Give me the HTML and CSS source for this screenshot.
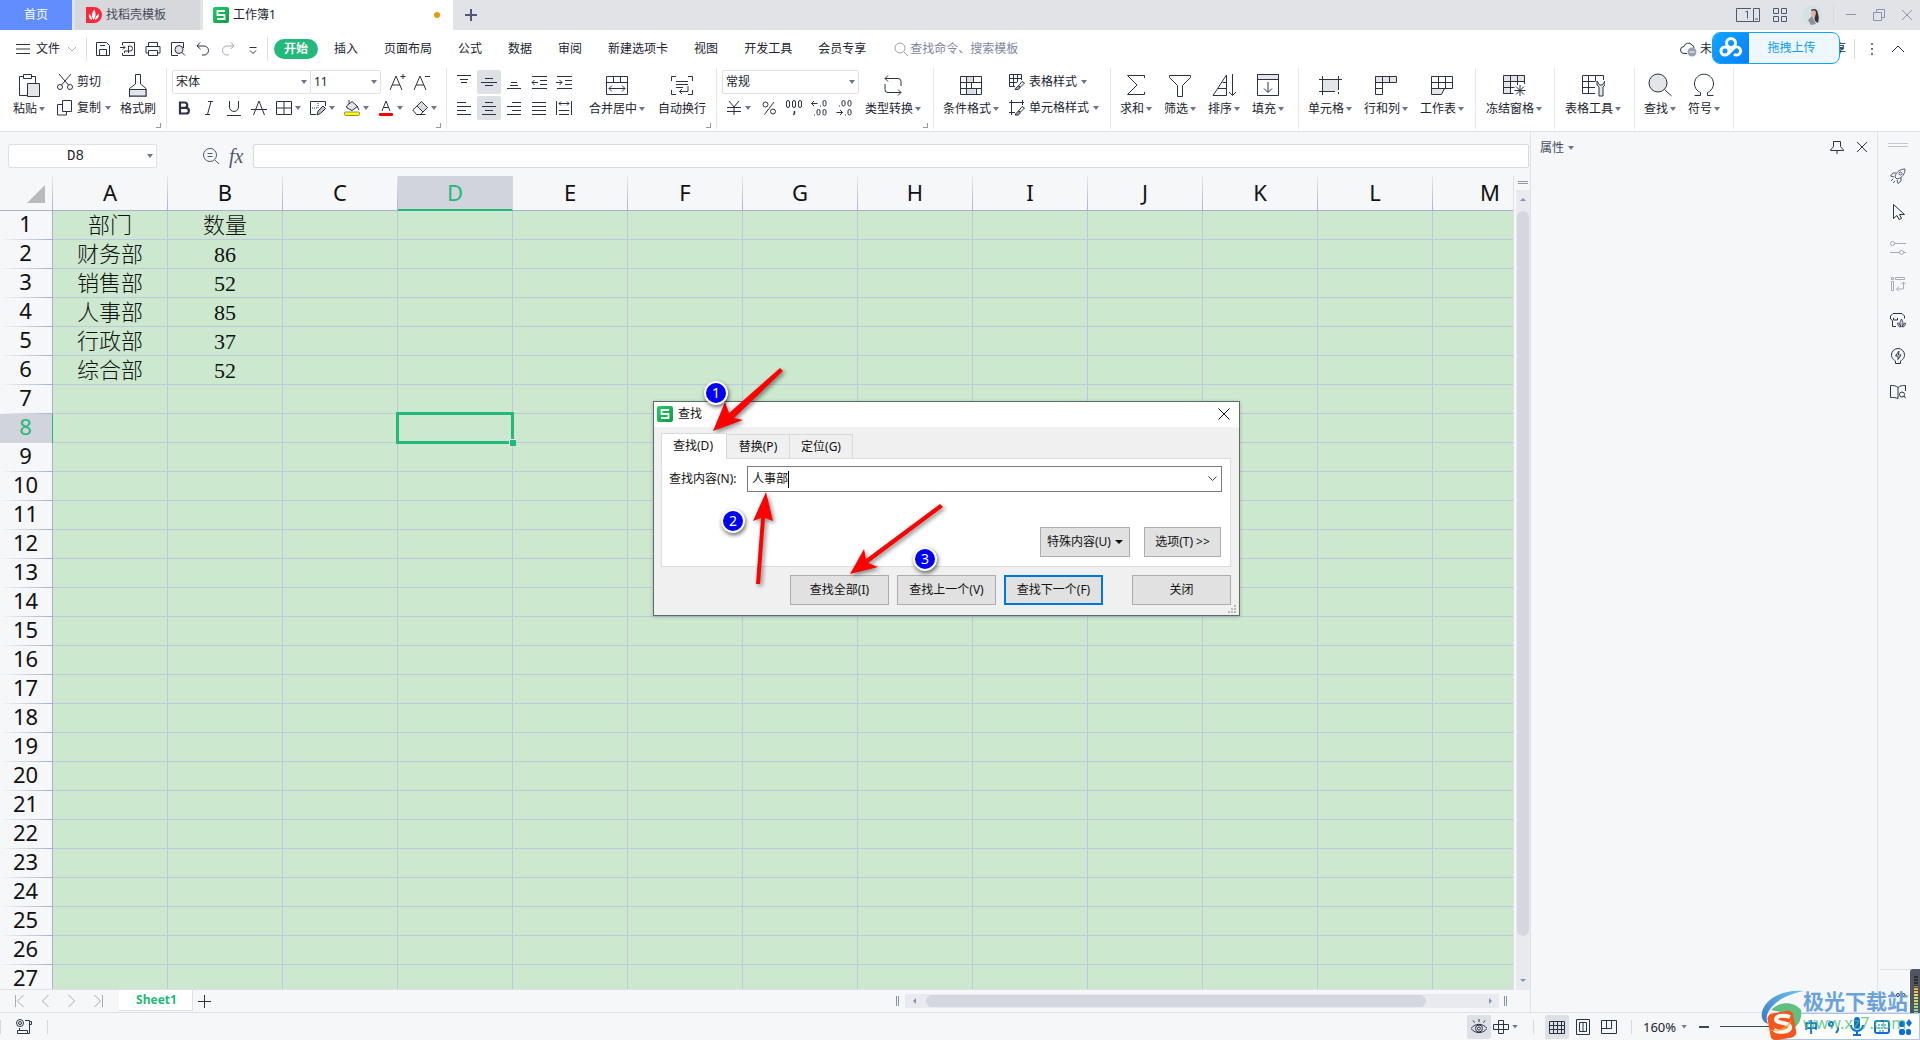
FILE: index.html
```html
<!DOCTYPE html>
<html lang="zh-CN">
<head>
<meta charset="utf-8">
<title>工作簿1</title>
<link rel="stylesheet" href="styles.css">
</head>
<body>
<svg class="sprite" aria-hidden="true">
  <linearGradient id="leaf" x1="0" y1="0" x2="1" y2="1"><stop offset="0" stop-color="#1fce63"/><stop offset="1" stop-color="#119a48"/></linearGradient>
  <linearGradient id="sky" x1="0" y1="1" x2="1" y2="0"><stop offset="0" stop-color="#3878c4"/><stop offset="1" stop-color="#6cc4f2"/></linearGradient>
  <symbol id="sheet-logo" viewBox="0 0 16 16"><rect width="16" height="16" rx="2" fill="url(#leaf)"/><path d="M12 4H4.500v4h7v4H4" fill="none" stroke="#fff" stroke-width="1.800"/></symbol>
</svg>

<header class="tabbar">
  <button class="tab home">首页</button>
  <button class="tab docer"><svg width="16" height="16" viewBox="0 0 16 16"><path d="M0 0h8a8 8 0 010 16H0z" fill="#f9263c"/><path d="M7.500 13C5 9 6 5 8.500 2.500 10 6 10 10 7.500 13zM6 13C3 12 2.500 9 3 7c2 1 3 3 3 6zM9 13c0-3 1.500-5 4-6 0 3-1 5-4 6z" fill="#fff"/></svg>找稻壳模板</button>
  <button class="tab book"><svg width="16" height="16"><use href="#sheet-logo"/></svg>工作簿1<i class="unsaved"></i></button>
  <button class="newtab" aria-label="新建"><svg width="12" height="12" viewBox="0 0 12 12"><path d="M6 0v12M0 6h12" stroke="#4d5874" stroke-width="2"/></svg></button>
  <div class="wincontrols">
    <svg class="slate" width="24" height="16" viewBox="0 0 24 16"><path d="M15 1.500H.5v13H23.500v-13H17.500v13" /><path d="M9.500 5l2-1v7.500M19 12h3"/></svg>
    <svg class="slate" width="16" height="16" viewBox="0 0 16 16"><path d="M1.500 1.500h5v5h-5zM9.500 1.500h5v5h-5zM1.500 9.500h5v5h-5zM9.500 9.500h5v5h-5z"/></svg>
    <svg class="avatar" width="20" height="20" viewBox="0 0 20 20"><circle cx="10" cy="10" r="10" fill="#d3e2e6"/><path d="M9 5c3-2 7-1 7 4 1 3 1 5 0 9l-3-2-1-6z" fill="#3b3034"/><path d="M9 7c2-3 5-2 5 1l-1 4-3 0z" fill="#dfb2a2"/><path d="M6 15l4-4 4 8-5 1z" fill="#8d9299"/></svg>
    <i class="vline"></i>
    <svg class="pale" width="16" height="16" viewBox="0 0 16 16"><path d="M3 7.500h10"/></svg>
    <svg class="pale" width="16" height="16" viewBox="0 0 16 16"><path d="M2.500 5.500h8v8h-8zM5.500 5V2.500h8v8H11"/></svg>
    <svg class="pale" width="16" height="16" viewBox="0 0 16 16"><path d="M3 3l10 10M13 3L3 13"/></svg>
  </div>
</header>

<nav class="menubar">
  <button class="file"><svg class="ic" width="14" height="12" viewBox="0 0 14 12"><path d="M0 1.500h14M0 6h14M0 10.500h14"/></svg>文件<svg class="mute" width="10" height="6" viewBox="0 0 10 6"><path d="M1 1l4 4 4-4"/></svg></button>
  <div class="quick">
    <button aria-label="保存"><svg class="ic" width="16" height="16" viewBox="0 0 16 16"><path d="M1.500 1.500h10l3 3v10h-13zM4.500 14.500v-6h7v6M5 4.500h5"/></svg></button>
    <button aria-label="输出为PDF"><svg class="ic" width="16" height="16" viewBox="0 0 16 16"><path d="M2.500 4V1.500h12v13h-12V12M0 6.500h5M3 4.500l2 2-2 2M8.500 12V5h1.500a2 2 0 010 5H4.500v2"/></svg></button>
    <button aria-label="打印"><svg class="ic" width="16" height="16" viewBox="0 0 16 16"><path d="M3.500 5V1.500h9V5M3.500 12h-2.500V5.500h14V12h-2.500M3.500 9.500h9v5h-9z"/></svg></button>
    <button aria-label="打印预览"><svg class="ic" width="16" height="16" viewBox="0 0 16 16"><path d="M8 14.500H1.500v-13h12V7"/><circle cx="9" cy="8.500" r="4" fill="#dfe1e5"/><path d="M12 11.500l3 3"/></svg></button>
    <button aria-label="撤销"><svg class="ic" width="16" height="16" viewBox="0 0 16 16"><path d="M5 1.500L2 5l3.500 3M2 5h7a4.500 4.500 0 010 9H7"/></svg></button>
    <button aria-label="恢复"><svg class="mute" width="16" height="16" viewBox="0 0 16 16"><path d="M11 1.500L14 5l-3.500 3M14 5H7a4.500 4.500 0 000 9h2"/></svg></button>
    <button aria-label="更多"><svg class="ic" width="16" height="16" viewBox="0 0 16 16"><path d="M4.500 6.500h7M5 9.500l3 3 3-3"/></svg></button>
  </div>
  <div class="menus">
    <button class="active">开始</button><button>插入</button><button>页面布局</button><button>公式</button><button>数据</button><button>审阅</button><button>新建选项卡</button><button>视图</button><button>开发工具</button><button>会员专享</button>
  </div>
  <label class="search"><svg width="14" height="14" viewBox="0 0 14 14"><circle cx="6" cy="6" r="5"/><path d="M10 10l4 4"/></svg><input type="text" placeholder="查找命令、搜索模板" aria-label="查找命令、搜索模板"></label>
  <div class="cloudbar">
    <button class="cloud"><svg class="ic" width="17" height="16" viewBox="0 0 17 16"><path d="M7 12.500H4a3.500 3.500 0 010-7 4.500 4.500 0 018-1.500 3 3 0 012 3"/><circle cx="12" cy="11" r="4.500" fill="#98a0b3" stroke="none"/><path d="M9.500 11h5" stroke="#fff"/></svg>未</button>
    <button class="share">享</button>
    <i class="vline"></i>
    <svg width="4" height="14" viewBox="0 0 4 14"><path d="M1 1h2v2H1zM1 6h2v2H1zM1 11h2v2H1z" fill="#6c7484"/></svg>
    <svg class="ic" width="14" height="8" viewBox="0 0 14 8"><path d="M1 7l6-6 6 6"/></svg>
  </div>
</nav>

<section class="ribbon">
  <div class="group clip">
    <button class="big"><svg class="ic" width="24" height="24" viewBox="0 0 24 24"><path d="M7 3.500H2.500v19H10M15 3.500h3.500V10M6.500 1.500h8v4h-8z"/><path d="M10.500 10.500h12v13h-12z" fill="#e4e5e8"/></svg><span>粘贴<i class="ar"></i></span></button>
    <div class="stack cut">
      <button class="mini"><svg class="ic" width="16" height="16" viewBox="0 0 16 16"><circle cx="3" cy="13" r="2.500"/><circle cx="13" cy="13" r="2.500"/><path d="M2 0l9.500 11M14 0L4.500 11"/></svg>剪切</button>
      <button class="mini"><svg class="ic" width="16" height="16" viewBox="0 0 16 16"><path d="M5.500.5h9v11h-9zM5 4.500H.5v10.500h9V12"/></svg>复制<i class="ar"></i></button>
    </div>
    <button class="big"><svg class="ic" width="24" height="24" viewBox="0 0 24 24"><path d="M9.500 11V1.500h5V11l5.500 4.500v8.500H3.500v-8.500z"/><path d="M3.500 16.500h16.500v6.500H3.500z" fill="#e4e5e8"/></svg><span>格式刷</span></button>
    <i class="launch"></i>
  </div>

  <div class="group font">
    <div class="stack">
      <div class="line joined">
        <span class="combo family"><select aria-label="字体"><option>宋体</option></select><i class="ar"></i></span>
        <span class="combo size"><select aria-label="字号"><option>11</option></select><i class="ar"></i></span>
        <button class="sq grow" aria-label="增大字号"><svg class="ic" width="18" height="18" viewBox="0 0 18 18"><path d="M2 17L8 3l6 14M4 12h8M15 1v5M12.500 3.500h5"/></svg></button>
        <button class="sq" aria-label="减小字号"><svg class="ic" width="18" height="18" viewBox="0 0 18 18"><path d="M2 17L8 3l6 14M4 12h8M13 3.500h5"/></svg></button>
      </div>
      <div class="line">
        <button class="sq" aria-label="加粗"><svg class="ic" width="16" height="16" viewBox="0 0 16 16"><path d="M4 2.500h5a2.700 2.700 0 010 5.300H4zM4 7.800h6a2.800 2.800 0 010 5.700H4z" stroke-width="2.200"/></svg></button>
        <button class="sq" aria-label="倾斜"><svg class="ic" width="16" height="16" viewBox="0 0 16 16"><path d="M7 1.500h5M4 14.500h5M10 1.500l-3.500 13"/></svg></button>
        <button class="sq" aria-label="下划线"><svg class="ic" width="16" height="16" viewBox="0 0 16 16"><path d="M3.500 1v6a4.500 4.500 0 009 0V1M1 15.500h14"/></svg></button>
        <button class="sq" aria-label="删除线"><svg class="ic" width="16" height="16" viewBox="0 0 16 16"><path d="M2.500 15L8 1l5.500 14M0 9.500h16"/></svg></button>
        <button class="drop" aria-label="边框"><svg class="ic" width="16" height="16" viewBox="0 0 16 16"><path d="M.5 1.500h15v13H.5zM8 1.500v13M.5 8h15"/></svg><i class="ar"></i></button>
        <button class="drop" aria-label="绘图边框"><svg class="ic" width="16" height="16" viewBox="0 0 16 16"><path d="M6 14.500H.5v-13h15V6"/><path d="M8 3v5H2" stroke-dasharray="1 1"/><path d="M7 15l1-4 5-5 2.500 2.500-5 5z" fill="#b9bec8"/></svg><i class="ar"></i></button>
        <button class="drop" aria-label="填充颜色"><svg class="ic" width="16" height="16" viewBox="0 0 16 16"><path d="M2.500 6L8 1.500l5.500 5L8 10.500 3 8z" fill="#e4e5e8"/><path d="M5 4V0M13 6l2 4"/><rect x=".5" y="12" width="15" height="3.500" rx="1" fill="#ff0" stroke="#8b8f55"/></svg><i class="ar"></i></button>
        <button class="drop" aria-label="字体颜色"><svg class="ic" width="16" height="16" viewBox="0 0 16 16"><path d="M4 11L8 1l4 10M5.500 7.500h5"/><rect x="1" y="13" width="14" height="3" rx="1" fill="red" stroke="none"/></svg><i class="ar"></i></button>
        <button class="drop" aria-label="清除"><svg class="ic" width="16" height="16" viewBox="0 0 16 16"><path d="M5 6l4.500-4.500 6 6L11 12z" fill="#d9dbe0"/><path d="M5 6L.8 10l3.700 4.500h4L11 12M4.500 14.500h9"/></svg><i class="ar"></i></button>
      </div>
    </div>
    <i class="launch"></i>
  </div>

  <div class="group align">
    <div class="stack">
      <div class="line">
        <button class="sq" aria-label="顶端对齐"><svg class="ic" width="16" height="16" viewBox="0 0 16 16"><path d="M1 1.500h14M4 5.500h8M5 8.500h6"/></svg></button>
        <button class="sq on" aria-label="垂直居中"><svg class="ic" width="16" height="16" viewBox="0 0 16 16"><path d="M4 4.500h8M0 8.500h16M4 11.500h8"/></svg></button>
        <button class="sq" aria-label="底端对齐"><svg class="ic" width="16" height="16" viewBox="0 0 16 16"><path d="M5 8.500h6M4 11.500h8M1 14.500h14"/></svg></button>
        <button class="sq" aria-label="减少缩进"><svg class="ic" width="16" height="16" viewBox="0 0 16 16"><path d="M1 2.500h15M9 6.500h7M9 10.500h7M1 14.500h15M1 8.500h6M3.500 6L1 8.500 3.500 11"/></svg></button>
        <button class="sq" aria-label="增加缩进"><svg class="ic" width="16" height="16" viewBox="0 0 16 16"><path d="M1 2.500h15M9 6.500h7M9 10.500h7M1 14.500h15M0 8.500h6M3.500 6L6 8.500 3.500 11"/></svg></button>
      </div>
      <div class="line">
        <button class="sq" aria-label="左对齐"><svg class="ic" width="16" height="16" viewBox="0 0 16 16"><path d="M1 2.500h9M1 6.500h14M1 10.500h9M1 14.500h14"/></svg></button>
        <button class="sq on" aria-label="水平居中"><svg class="ic" width="16" height="16" viewBox="0 0 16 16"><path d="M4 2.500h8M1 6.500h14M4 10.500h8M1 14.500h14"/></svg></button>
        <button class="sq" aria-label="右对齐"><svg class="ic" width="16" height="16" viewBox="0 0 16 16"><path d="M6 2.500h9M1 6.500h14M6 10.500h9M1 14.500h14"/></svg></button>
        <button class="sq" aria-label="两端对齐"><svg class="ic" width="16" height="16" viewBox="0 0 16 16"><path d="M1 2.500h14M1 6.500h14M1 10.500h14M1 14.500h14"/></svg></button>
        <button class="sq" aria-label="分散对齐"><svg class="ic" width="16" height="16" viewBox="0 0 16 16"><path d="M.5 1v14M15.500 1v14M3 3.500h10M5 1.500l-2 2 2 2M11 1.500l2 2-2 2M3 10.500h10M3 14.500h10"/></svg></button>
      </div>
    </div>
    <button class="big"><svg class="ic" width="24" height="24" viewBox="0 0 24 24"><path d="M1.500 3.500h21v18h-21zM1.500 9.500h21M8.500 3.500v6M15.500 3.500v6M4 15.500h16M7 12.500l-3 3 3 3M17 12.500l3 3-3 3"/></svg><span>合并居中<i class="ar"></i></span></button>
    <button class="big"><svg class="ic" width="24" height="24" viewBox="0 0 24 24"><path d="M6 3.500H1.500V8M18 3.500h4.500V8M6 21.500H1.500V17M18 21.500h4.500V17M6 8.500h12M6 11.500h12M6 14.500h7M18 13v5.500H9.500M12 16l-2.500 2.500L12 21"/></svg><span>自动换行</span></button>
    <i class="launch"></i>
  </div>

  <div class="group number">
    <div class="stack">
      <div class="line"><span class="combo format"><select aria-label="数字格式"><option>常规</option></select><i class="ar"></i></span></div>
      <div class="line">
        <button class="drop" aria-label="货币"><svg class="ic" width="16" height="16" viewBox="0 0 16 16"><path d="M3 1l5 6 5-6M1 7.500h14M1 11.500h14M8 7v8"/></svg><i class="ar"></i></button>
        <button class="sq" aria-label="百分比"><svg class="ic" width="16" height="16" viewBox="0 0 16 16"><circle cx="4.500" cy="4.500" r="2.500"/><circle cx="12" cy="11.500" r="2.500"/><path d="M13 2L3.500 14.500"/></svg></button>
        <button class="sq" aria-label="千位分隔"><svg class="ic" width="18" height="16" viewBox="0 0 18 16"><rect x="1.500" y=".5" width="3" height="7" rx="1.500"/><rect x="7.500" y=".5" width="3" height="7" rx="1.500"/><rect x="13.500" y=".5" width="3" height="7" rx="1.500"/><path d="M9.500 11v2l-1 2" stroke-width="1.500"/></svg></button>
        <button class="sq" aria-label="增加小数"><svg class="ic" width="16" height="16" viewBox="0 0 16 16"><path d="M.5 3.500h6M3 1L.5 3.500 3 6M9 6h1M3 15h1"/><rect x="12" y=".5" width="3" height="5.500" rx="1.500"/><rect x="6" y="9.500" width="3" height="5.500" rx="1.500"/><rect x="12" y="9.500" width="3" height="5.500" rx="1.500"/></svg></button>
        <button class="sq" aria-label="减少小数"><svg class="ic" width="16" height="16" viewBox="0 0 16 16"><path d="M.5 12.500h6M4 10l2.500 2.500L4 15M3 6h1M9 15h1"/><rect x="12" y=".5" width="3" height="5.500" rx="1.500"/><rect x="6" y=".5" width="3" height="5.500" rx="1.500"/><rect x="12" y="9.500" width="3" height="5.500" rx="1.500"/></svg></button>
      </div>
    </div>
    <button class="big"><svg class="ic" width="24" height="24" viewBox="0 0 24 24"><path d="M7 2.500L4 5.500l3 3M4 5.500h13a3 3 0 013 3V13M4 11v5.500a3 3 0 003 3h13M17 16.500l3 3-3 3"/></svg><span>类型转换<i class="ar"></i></span></button>
    <i class="launch"></i>
  </div>

  <div class="group style">
    <button class="big"><svg class="ic" width="24" height="24" viewBox="0 0 24 24"><path d="M7.500 3.500h7v6h-7zM7.500 15.500h9v6h-9z" fill="#dcdee3" stroke="none"/><path d="M1.500 3.500h21v18h-21zM1.500 9.500h21M1.500 15.500h21M7.500 3.500v18M14.500 3.500v6M12.500 9.500v6M17.500 15.500v6"/></svg><span>条件格式<i class="ar"></i></span></button>
    <div class="stack">
      <button class="mini"><svg class="ic" width="16" height="16" viewBox="0 0 16 16"><path d="M6 12.500H.5V.5h12V6M.5 4.500h12M.5 8.500H8M4.500.5v12M8.500.5V8M13 7.500l2.500 1.500-4 4-2-1z"/><path d="M10 12c-2 0-3 2-4 3.500 3 .5 5-.5 5-2.500z" fill="#9aa1b0"/></svg>表格样式<i class="ar"></i></button>
      <button class="mini"><svg class="ic" width="16" height="16" viewBox="0 0 16 16"><path d="M2.500 0v15M0 2.500h15M13.500 0v5M0 12.500h6M13 6.500l2.500 1.500-4 4-2-1z"/><path d="M10 11.500c-2 0-3 2-4 3.500 3 .5 5-.5 5-2.500z" fill="#9aa1b0"/></svg>单元格样式<i class="ar"></i></button>
    </div>
  </div>

  <div class="group edit">
    <button class="big"><svg class="ic" width="24" height="24" viewBox="0 0 24 24"><path d="M20.500 5V2.500h-17l9.500 9.500-9.500 9.500h17V19"/></svg><span>求和<i class="ar"></i></span></button>
    <button class="big"><svg class="ic" width="24" height="24" viewBox="0 0 24 24"><path d="M1.500 2.500h21v2l-8 8v11h-5v-11l-8-8z"/></svg><span>筛选<i class="ar"></i></span></button>
    <button class="big"><svg class="ic" width="24" height="24" viewBox="0 0 24 24"><path d="M1 22.500L14.500 2v20.500zM10.500 9.500h4M6 15.500h8.500M20.500 1v21M17 19l3.500 3.500L24 19"/></svg><span>排序<i class="ar"></i></span></button>
    <button class="big"><svg class="ic" width="24" height="24" viewBox="0 0 24 24"><path d="M1.500 1.500h21v5h-21z" fill="#e4e5e8"/><path d="M1.500 1.500h21v21h-21zM12 9v10M8 15.500l4 4 4-4"/></svg><span>填充<i class="ar"></i></span></button>
  </div>

  <div class="group cells">
    <button class="big"><svg class="ic" width="24" height="24" viewBox="0 0 24 24"><path d="M4.500 6.500h16v12h-16z" fill="#e4e5e8" stroke="none"/><path d="M4.500 3v19M20.500 3v14M1 6.500h23M1 18.500h16M20.500 19v2"/></svg><span>单元格<i class="ar"></i></span></button>
    <button class="big"><svg class="ic" width="24" height="24" viewBox="0 0 24 24"><path d="M1.500 3.500h21v6h-21z" fill="#e4e5e8"/><path d="M8.500 3.500v18h-7v-18M15.500 3.500v6M1.500 15.500h7"/></svg><span>行和列<i class="ar"></i></span></button>
    <button class="big"><svg class="ic" width="24" height="24" viewBox="0 0 24 24"><path d="M1.500 15.500h13l-3 6h-10z" fill="#e4e5e8"/><path d="M1.500 3.500h21v12h-21zM1.500 9.500h21M8.500 3.500v12M15.500 3.500v12"/></svg><span>工作表<i class="ar"></i></span></button>
  </div>

  <div class="group freeze">
    <button class="big"><svg class="ic" width="24" height="24" viewBox="0 0 24 24"><path d="M1.500 2.500h21v6h-14v12h-7z" fill="#e4e5e8"/><path d="M8.500 20.500v-18M15.500 2.500V12M22.500 2.500V11M1.500 8.500h21M1.500 14.500h11M1.500 20.500h10M18 12v11M12.500 17.500h11M14 13.500l8 8M22 13.500l-8 8"/></svg><span>冻结窗格<i class="ar"></i></span></button>
  </div>
  <div class="group tools">
    <button class="big"><svg class="ic" width="24" height="24" viewBox="0 0 24 24"><path d="M14 20.500H1.500v-18h21V7M1.500 8.500h13M1.500 14.500H14M7.500 2.500v18M14.500 2.500V8"/><path d="M16 8v4l2 2v9h4v-9l2-2V8l-2.500 4h-3z" fill="#e4e5e8"/></svg><span>表格工具<i class="ar"></i></span></button>
  </div>
  <div class="group find">
    <button class="big"><svg class="ic" width="24" height="24" viewBox="0 0 24 24"><circle cx="10" cy="10" r="9" fill="#e4e5e8"/><path d="M16.500 16.500l7 6.500"/></svg><span>查找<i class="ar"></i></span></button>
    <button class="big"><svg class="ic" width="24" height="24" viewBox="0 0 24 24"><path d="M2.500 22.500h6v-3a9.500 9.500 0 117 0v3h6"/></svg><span>符号<i class="ar"></i></span></button>
  </div>
</section>

<main class="work">
  <section class="sheet">
    <div class="formulabar">
      <span class="combo namebox"><input type="text" value="D8" aria-label="名称框"><i class="ar"></i></span>
      <svg class="slate" width="18" height="18" viewBox="0 0 18 18"><circle cx="8" cy="8" r="6.500"/><path d="M13 13l4 4M5.500 6.500h5M5.500 9.500h5"/></svg>
      <em>fx</em>
      <input class="formula" type="text" aria-label="编辑栏">
    </div>
    <div class="gridarea">
      <div class="viewport"><table class="grid" id="grid"></table></div>
      <div class="vscroll">
        <i class="split"></i>
        <div class="vtrack"><i class="tri up"></i><i class="vthumb"></i><i class="tri down"></i></div>
      </div>
    </div>
    <div class="sheetbar">
      <div class="sheetnav">
        <svg class="mute" width="12" height="14" viewBox="0 0 12 14"><path d="M1.500 1v12M9.500 1l-6 6 6 6"/></svg>
        <svg class="mute" width="12" height="14" viewBox="0 0 12 14"><path d="M8.500 1l-6 6 6 6"/></svg>
        <svg class="mute" width="12" height="14" viewBox="0 0 12 14"><path d="M2.500 1l6 6-6 6"/></svg>
        <svg class="mute" width="12" height="14" viewBox="0 0 12 14"><path d="M10.500 1v12M2.500 1l6 6-6 6"/></svg>
      </div>
      <button class="sheettab">Sheet1</button>
      <button class="addsheet" aria-label="新建工作表"><svg class="ic" width="14" height="14" viewBox="0 0 14 14"><path d="M7.500 1v13M1 7.500h13"/></svg></button>
      <div class="hscroll"><i class="bars"></i><div class="htrack"><i class="tri left"></i><i class="hthumb"></i><i class="tri right"></i></div><i class="bars"></i></div>
    </div>
  </section>

  <aside class="panel">
    <button>属性<i class="ar"></i></button>
    <svg class="ic" width="14" height="14" viewBox="0 0 14 14"><path d="M3.500 1.500h7v5l3 3.500v.5H.5V10l3-3.500zM7 10.500V14"/></svg>
    <svg class="ic" width="12" height="12" viewBox="0 0 12 12"><path d="M1 1l10 10M11 1L1 11"/></svg>
  </aside>

  <aside class="rail">
    <i class="grip"></i>
    <svg class="slate" width="16" height="16" viewBox="0 0 16 16"><path d="M5 9C6 4 10 1 15 1c0 5-3 9-8 10zM6 5H3L.5 8 4 9M11 9.500V13l-3 2.500L7 12M3 11l-2 2M5 13l-2 2"/><circle cx="10.500" cy="5.500" r="1.500"/></svg>
    <svg class="ic" width="16" height="16" viewBox="0 0 16 16"><path d="M3.500.5v14l3.500-3 2 4 2.500-1-2-4h5z"/></svg>
    <svg class="mute" width="16" height="16" viewBox="0 0 16 16"><circle cx="2.500" cy="3.500" r="2"/><circle cx="11.500" cy="12.500" r="2"/><path d="M4.500 3.500H16M0 12.500h9.500M13.500 12.500H16"/></svg>
    <svg class="mute" width="16" height="16" viewBox="0 0 16 16"><path d="M1.500 1.500h2v2h-2zM5.500 1.500h9v2h-9zM1.500 5.500h2v9h-2zM13.500 6v7H7M11 8.500L13.500 6 16 8.500M9 10.500L6.500 13 9 15.500"/></svg>
    <svg class="ic" width="16" height="16" viewBox="0 0 16 16"><path d="M6 14.500H2.500V8.500L.5 7V4L3 1.500h9L14.500 4v2.500M3.500 6v2h4V6"/><path d="M11.500 15c-2-2-2-5 0-8 2 3 2 6 0 8zM10.500 15c-2 0-3-2-3-4 2 0 3 2 3 4zM12.500 15c2 0 3-2 3-4-2 0-3 2-3 4z" fill="#c5c9d2" stroke-width=".8"/></svg>
    <svg class="ic" width="16" height="16" viewBox="0 0 16 16"><path d="M5.500 13C2 11 1.500 8.500 1.500 7a6.500 6.500 0 0113 0c0 1.500-.5 4-4 6v2.500h-5zM9 3L5.500 8H8v3.500L11 7H8.500z"/></svg>
    <svg class="ic" width="16" height="16" viewBox="0 0 16 16"><path d="M8 3.500C6 1.500 3 1.500.5 1.500v12c3 0 5 0 7.500 1V3.500c2-2 5-2 7.500-2V7"/><circle cx="12" cy="10.500" r="2.500"/><path d="M14 12l2 2.500"/></svg>
    <div class="more"><svg class="ic" width="16" height="6" viewBox="0 0 16 6"><circle cx="2.500" cy="3" r="1.500"/><circle cx="8" cy="3" r="1.500"/><circle cx="13.500" cy="3" r="1.500"/></svg></div>
  </aside>
</main>

<footer class="status">
  <i class="vline"></i>
  <svg class="ic" width="16" height="16" viewBox="0 0 16 16"><circle cx="4" cy="4" r="3.500"/><circle cx="4" cy="4" r="1.500"/><path d="M9 1.500h4.500v13M13.500 2.500h2v3h-2M1.500 11.500h10v3h-10zM3.500 9v2M11.500 14.500h2"/></svg>
  <i class="vline"></i>
  <div class="views">
    <button class="sq on" aria-label="护眼模式"><svg class="ic" width="16" height="16" viewBox="0 0 16 16"><path d="M0 9.500c4-5.500 12-5.500 16 0-4 5.500-12 5.500-16 0zM8 0v3M2 1.500l1.500 2M14 1.500l-1.500 2"/><circle cx="8" cy="9.500" r="3.500"/><circle cx="8" cy="9.500" r="1.500"/></svg></button>
    <button class="drop" aria-label="阅读模式"><svg class="ic" width="16" height="16" viewBox="0 0 16 16"><path d="M5.500 1.500h5v13h-5zM.5 5.500h15v5H.5z"/></svg><i class="ar"></i></button>
    <i class="vline"></i>
    <button class="sq on" aria-label="普通视图"><svg class="ic" width="16" height="16" viewBox="0 0 16 16"><path d="M.5 2.500h15v12H.5zM.5 6.500h15M.5 10.500h15M4.500 2.500v12M8.500 2.500v12M12.500 2.500v12"/></svg></button>
    <button class="sq" aria-label="分页预览"><svg class="ic" width="16" height="16" viewBox="0 0 16 16"><path d="M1.500.5h13v15h-13zM4.500 3.500h7v9h-7zM8 3.500v9"/></svg></button>
    <button class="sq" aria-label="页面布局"><svg class="ic" width="16" height="16" viewBox="0 0 16 16"><path d="M.5 1.500h15v13H.5zM5.500 1.500v8M10.500 1.500v8M.5 9.500h10"/></svg></button>
    <i class="vline"></i>
    <button class="zoom">160%<i class="ar"></i></button>
    <i class="minus"></i><i class="slider"></i>
  </div>
</footer>

<div class="upload"><svg width="36" height="30" viewBox="0 0 36 30"><g fill="none" stroke="#fff" stroke-width="3"><circle cx="18" cy="10" r="4.500"/><circle cx="12" cy="18" r="4"/><path d="M15 21l6-6a4 4 0 11 0 6"/></g></svg><button>拖拽上传</button></div>

<form class="dialog" id="find">
  <header><svg width="16" height="16"><use href="#sheet-logo"/></svg>查找<button type="button" aria-label="关闭窗口"><svg width="12" height="12" viewBox="0 0 12 12"><path d="M.5.5l11 11M11.500.5l-11 11" stroke="#111"/></svg></button></header>
  <div class="dtabs"><button type="button" class="cur">查找(D)</button><button type="button">替换(P)</button><button type="button">定位(G)</button></div>
  <div class="pane">
    <div class="field"><label for="what">查找内容(N):</label><div class="entry"><input id="what" type="text" value="人事部"><i class="caret"></i><svg width="9" height="6" viewBox="0 0 9 6"><path d="M.5.5l4 4 4-4" fill="none" stroke="#444"/></svg></div></div>
    <div class="opts"><button type="button">特殊内容(U)<i class="ar"></i></button><button type="button">选项(T) &gt;&gt;</button></div>
  </div>
  <div class="actions"><button type="button">查找全部(I)</button><button type="button">查找上一个(V)</button><button type="button" class="primary">查找下一个(F)</button><button type="button" class="close">关闭</button></div>
  <svg class="sizer" width="8" height="8" viewBox="0 0 8 8"><path d="M6 0h2v2H6zM3 3h2v2H3zM6 3h2v2H6zM0 6h2v2H0zM3 6h2v2H3zM6 6h2v2H6z" fill="#bbb"/></svg>
  <svg class="marks" width="587" height="215" viewBox="0 0 587 215">
    <g fill="red"><path d="M127-33l3 3-49 47 9 2-30 11 12-29 4 11z"/><path d="M103 183l5-66-8 3 13-29 7 29-8-3-5 66z"/><path d="M287 103l3 3-75 56 10 4-28 7 14-25 2 10z"/></g>
  </svg>
  <b class="step one">1</b><b class="step two">2</b><b class="step three">3</b>
</form>

<div class="meter"><i></i></div>
<div class="ime">
  <button>中</button>
  <svg width="84" height="20" viewBox="0 0 84 20"><g fill="none" stroke="#0a6fd8" stroke-width="2"><circle cx="4" cy="7" r="2"/><path d="M11 10v3l-2 3M24 8a6 6 0 0012 0M30 14v4M26 18h8"/><rect x="48" y="4" width="14" height="12" rx="2"/><path d="M51 8h8M51 11h8M52 14h6" stroke-dasharray="2 1" stroke-width="1"/></g><g fill="#0a6fd8"><rect x="27" y="0" width="6" height="12" rx="3"/><rect x="72" y="4" width="6" height="6" rx="2"/><path d="M82 2l3 4-3 4-3-4z"/><rect x="72" y="12" width="6" height="6" rx="2"/><rect x="79" y="12" width="5" height="6" rx="2"/></g></svg>
</div>
<div class="brand">
  <svg width="44" height="50" viewBox="0 0 44 50"><path d="M43 1C18-2-2 14 1 28c1 3 3 5 6 6C1 22 16 6 43 1z" fill="url(#sky)"/><path d="M10 20C20 10 34 12 40 20c2 12-6 22-22 23 12-6 16-12 12-17-4-4-12-4-20-6z" fill="#63bf80"/><rect x="8" y="22" width="26" height="27" rx="5" transform="rotate(-10 21 36)" fill="#f4571c"/><path d="M29 27c-5-2-14-2-14 3 1 4 14 2 14 7 1 5-11 6-16 3" fill="none" stroke="#fff" stroke-width="4"/><path d="M3 39c14 3 22-1 27-9 0 9-10 15-27 9z" fill="#f3a942" opacity=".7"/></svg>
  <div><strong>极光下载站</strong><span>www.xz7.com</span></div>
</div>
<script src="grid.js"></script>
</body>
</html>
```
FILE: styles.css
```css
* { box-sizing: border-box; }
body {
  --ink: #2b3245;
  --line: #dfe1e7;
  --green: #22b97b;
  margin: 0;
  height: 100vh;
  position: relative;
  display: flex;
  flex-direction: column;
  overflow: hidden;
  background: #f5f7f9;
  color: #20242f;
  font: 12px/20px "Noto Sans", "Noto Sans CJK SC", sans-serif;
}
button, input, select { font: inherit; color: inherit; border: 0; background: none; padding: 0; margin: 0; border-radius: 0; white-space: nowrap; outline: 0; }
svg { display: block; flex: none; }
i { font-style: normal; flex: none; }
.sprite { position: absolute; width: 0; height: 0; }
.ic { fill: none; stroke: var(--ink); }
.mute { fill: none; stroke: #a6abb8; }
.slate { fill: none; stroke: #4d5874; }
.pale { fill: none; stroke: #8a95b5; }
.ar { display: inline-block; width: 6px; height: 4px; background: #6b7590; clip-path: polygon(0 0, 100% 0, 50% 100%); }
.vline { width: 1px; height: 20px; background: #d8dae1; }

.tabbar { display: flex; height: 30px; flex: none; background: #e2e3e7; }
.tab { display: flex; align-items: center; gap: 4px; text-align: left; }
.home { width: 72px; justify-content: center; background: #608dff; color: #fff; }
.docer { width: 125px; margin-left: 3px; padding-left: 11px; background: #d7d8db; color: #454b5a; }
.book { width: 250px; margin-left: 3px; padding: 0 13px 0 10px; background: #fff; }
.unsaved { width: 6px; height: 6px; margin-left: auto; border-radius: 50%; background: #e69a0b; }
.newtab { width: 36px; display: grid; place-items: center; }
.wincontrols { margin-left: auto; display: flex; align-items: center; gap: 12px; padding-right: 5px; }
.avatar { margin-left: 2px; }
.wincontrols .vline { margin: 0 -3px 0 -1px; }

.menubar { display: flex; align-items: center; height: 37px; flex: none; padding: 1px 15px 0 16px; background: #fff; }
.file { display: flex; align-items: center; gap: 7px; width: 71px; border-right: 1px solid var(--line); height: 24px; }
.file .ic { margin-right: -1px; }
.quick { display: flex; align-items: center; gap: 9px; padding-left: 8px; width: 181px; height: 24px; border-right: 1px solid var(--line); }
.quick button { width: 16px; flex: none; }
.menus { display: flex; padding-left: 3px; }
.menus button { padding: 0 13px; }
.menus .active { padding: 0 10px; margin: 0 3px; border-radius: 10px; background: var(--green); color: #fff; font-weight: 700; }
.search { display: flex; align-items: center; gap: 2px; margin-left: 15px; }
.search svg { fill: none; stroke: #93a0b8; }
.search input { width: 140px; }
.search input::placeholder { color: #7c869e; opacity: 1; }
.cloudbar { margin-left: auto; display: flex; align-items: center; }
.cloud { display: flex; align-items: center; gap: 3px; }
.share { margin-left: 122px; }
.cloudbar .vline { margin: 0 15px 0 8px; }
.cloudbar > .ic { margin-left: 17px; }

.ribbon { display: flex; height: 65px; flex: none; padding-top: 1px; background: #fff; border-bottom: 1px solid #e2e4e8; }
.group { position: relative; display: flex; align-items: flex-start; height: 61px; padding: 2px 0 0 9px; border-right: 1px solid #e6e8ec; flex: none; }
.launch { position: absolute; right: 5px; bottom: 1px; width: 5px; height: 5px; border: solid #8e97ab; border-width: 0 1px 1px 0; }
.clip { width: 167px; padding-left: 13px; gap: 12px; }
.font { width: 280px; padding-left: 5px; }
.align { width: 270px; padding-left: 5px; gap: 13px; }
.number { width: 217px; padding-left: 5px; gap: 6px; }
.style { width: 177px; gap: 10px; }
.edit { width: 188px; gap: 12px; }
.cells { width: 177px; gap: 12px; }
.freeze { width: 79px; padding-left: 10px; }
.tools { width: 80px; padding-left: 10px; }
.find { width: 99px; gap: 12px; }
.big { display: flex; flex-direction: column; align-items: center; gap: 2px; padding-top: 3px; }
.big span { display: flex; align-items: center; gap: 2px; }
.stack { display: grid; gap: 2px; }
.cut { width: 51px; }
.mini { display: flex; align-items: center; gap: 4px; height: 24px; }
.line { display: flex; gap: 1px; height: 24px; }
.joined { gap: 0; }
.sq { display: grid; place-items: center; width: 24px; height: 24px; border-radius: 2px; }
.sq.on { background: #dde1e6; }
.grow { margin-left: 4px; }
.drop { display: flex; align-items: center; gap: 3px; width: 34px; height: 24px; padding-left: 4px; }
.drop + .drop { margin-left: -1px; }
.combo { display: grid; align-items: center; border: 1px solid var(--line); border-radius: 2px; background: #fff; height: 24px; }
.combo > * { grid-area: 1 / 1; }
.combo select, .combo input { appearance: none; width: 100%; padding-left: 3px; }
.combo .ar { justify-self: end; margin-right: 3px; }
.family { width: 139px; }
.size { width: 71px; margin-left: -1px; }
.format { width: 137px; }

.work { display: flex; flex: 1; min-height: 0; }
.sheet { flex: 1; min-width: 0; display: flex; flex-direction: column; }
.formulabar { display: flex; align-items: center; height: 44px; flex: none; padding: 4px 1px 0 8px; }
.namebox { width: 149px; margin-right: 45px; }
.namebox input { text-align: center; padding: 0 14px 0 0; font: 14px/20px "Liberation Mono", monospace; }
.formulabar em { width: 33px; padding-left: 9px; color: #4d5874; font: italic 20px/24px "Liberation Serif", serif; }
.formula { flex: 1; height: 24px; border: 1px solid #d5d8de; border-radius: 2px; background: #fff; }
.gridarea { display: flex; flex: 1; min-height: 0; }
.viewport { flex: 1; min-width: 0; overflow: hidden; border-bottom: 1px solid var(--line); border-right: 1px solid #dcdfe5; background: #cce8cf; }
.grid { table-layout: fixed; border-collapse: separate; border-spacing: 0; width: 1548px; }
.grid th, .grid td { padding: 0; text-align: center; vertical-align: top; }
.grid th { background: #f5f7f9; color: #111; font-size: 22px; font-weight: 400; line-height: 24px; }
.grid thead th { width: 115px; height: 35px; padding-top: 4px; border-bottom: 1px solid #a9b0ca; border-right: 1px solid; border-image: linear-gradient(to top, #a9b0ca, #e9ebf1) 1; }
.grid thead .corner { width: 53px; }
.corner svg { margin: 5px 0 0 27px; }
.grid tbody th { height: 29px; padding-right: 1px; border-right: 1px solid #a9b0ca; background: linear-gradient(to right, #f5f7f9, #a9b0ca) bottom / 100% 1px no-repeat #f5f7f9; }
.grid td { height: 29px; padding-top: 2px; border-right: 1px solid #c1c7dc; border-bottom: 1px solid #c1c7dc; background: #cce8cf; color: #111; font: 22px/26px "Liberation Serif", "Noto Sans CJK SC", serif; font-weight: 300; }
.grid thead .sel { background: #d1d4dc; color: var(--green); border-image: none; border-color: #d1d4dc; border-bottom: 2px solid var(--green); }
.grid tbody .sel { background: #d1d4dc; color: var(--green); border-right: 1px solid var(--green); }
.grid .cursor { position: relative; }
.cursor::before { content: ""; position: absolute; inset: -2px; border: 3px solid var(--green); }
.cursor::after { content: ""; position: absolute; right: -4px; bottom: -4px; width: 6px; height: 6px; background: var(--green); border: solid #fff; border-width: 1px 0 0 1px; }
.vscroll { width: 16px; padding-left: 2px; display: flex; flex-direction: column; }
.split { width: 10px; height: 3px; margin: 5px 2px 6px; border: solid #8e97ab; border-width: 1px 0; }
.vtrack { flex: 1; display: flex; flex-direction: column; align-items: center; background: #e8eaf0; padding: 8px 0; }
.vthumb { width: 12px; flex: 1; margin: 10px 0 43px; border-radius: 6px; background: #d4d7e0; }
.tri { background: #8592b5; }
.up { width: 6px; height: 3px; clip-path: polygon(50% 0, 100% 100%, 0 100%); }
.down { width: 6px; height: 3px; clip-path: polygon(0 0, 100% 0, 50% 100%); }
.left { width: 3px; height: 6px; clip-path: polygon(0 50%, 100% 0, 100% 100%); }
.right { width: 3px; height: 6px; clip-path: polygon(0 0, 100% 50%, 0 100%); }
.sheetbar { display: flex; align-items: center; height: 22px; flex: none; }
.sheetnav { display: flex; gap: 14px; padding-left: 14px; width: 119px; }
.sheettab { width: 74px; height: 21px; align-self: flex-start; background: #fff; border: solid #dfe1e7; border-width: 0 1px 1px 0; color: var(--green); font-weight: 700; padding-left: 2px; }
.addsheet { margin-left: 4px; }
.hscroll { display: flex; align-items: center; width: 611px; margin-left: auto; margin-right: 23px; }
.bars { width: 3px; height: 10px; border: solid #8592b5; border-width: 0 1px; }
.htrack { flex: 1; display: flex; align-items: center; height: 14px; margin: 0 5px 0 6px; padding: 0 7px 0 8px; background: #e8eaf0; }
.hthumb { flex: 1; height: 12px; margin: 0 63px 0 10px; border-radius: 6px; background: #d4d7e0; }

.panel { display: flex; align-items: flex-start; width: 347px; flex: none; padding: 8px 9px 0 9px; border-left: 1px solid var(--line); }
.panel button { display: flex; align-items: center; gap: 4px; margin-right: auto; height: 16px; color: #444b5c; }
.panel svg + svg { margin: 1px 0 0 12px; }
.rail { width: 43px; flex: none; border-left: 1px solid var(--line); display: flex; flex-direction: column; align-items: center; gap: 20px; padding: 11px 2px 0 0; }
.grip { width: 20px; height: 4px; border: solid #c3c7d0; border-width: 1px 0; margin-bottom: 1px; }
.more { margin-top: auto; width: 36px; height: 43px; padding: 22px 10px 0; border-top: 1px solid var(--line); }

.status { display: flex; align-items: center; height: 28px; flex: none; border-top: 1px solid var(--line); gap: 15px; }
.status .vline { height: 14px; }
.views { margin-left: auto; width: 453px; display: flex; align-items: center; gap: 2px; }
.views .drop { margin-left: -4px; }
.views .vline { margin: 0 9px 0 8px; }
.zoom { display: flex; align-items: center; gap: 5px; font-size: 13px; }
.minus { width: 10px; height: 2px; margin-left: 10px; background: #3b4662; }
.slider { flex: 1; height: 1px; margin-left: 9px; background: #3b4662; }

.upload { position: absolute; top: 32px; right: 80px; display: flex; width: 128px; height: 32px; border: 1px solid #12a1ff; border-radius: 8px; overflow: hidden; background: #ecf7ff; }
.upload svg { background: linear-gradient(135deg, #10a6ff, #087fff); }
.upload button { flex: 1; padding-right: 5px; color: #0d9bf5; }

.dialog { position: absolute; left: 653px; top: 401px; width: 587px; background: #f0f0f0; border: 1px solid #5d6b62; box-shadow: 0 1px 4px rgb(0 0 0 / .2); color: #111; }
.dialog header { display: flex; align-items: center; gap: 5px; height: 25px; padding: 0 9px 1px 3px; background: #fff; }
.dialog header button { margin-left: auto; }
.dtabs { display: flex; align-items: flex-end; height: 31px; padding-left: 7px; }
.dtabs button { height: 24px; width: 63px; border: 1px solid #d9d9d9; border-left: 0; border-bottom: 0; }
.dtabs .cur { height: 26px; width: 66px; margin-bottom: -1px; padding: 0 2px 2px 0; border-left: 1px solid #d9d9d9; background: #fff; z-index: 1; }
.pane { margin: 0 8px 0 7px; padding: 7px 8px 9px 7px; border: 1px solid #dcdcdc; background: #fff; }
.field { display: flex; align-items: center; justify-content: space-between; }
.entry { display: flex; align-items: center; width: 475px; height: 26px; padding: 0 4px; border: 1px solid #7a7a7a; background: #fff; }
.entry input { width: 36px; }
.caret { width: 1px; height: 17px; background: #000; }
.entry svg { margin-left: auto; }
.opts { display: flex; justify-content: flex-end; gap: 14px; margin-top: 35px; padding-right: 1px; }
.opts button, .actions button { height: 30px; border: 1px solid #adadad; background: #e1e1e1; }
.opts button { width: 90px; }
.opts button + button { width: 77px; }
.opts .ar { width: 8px; height: 4px; margin: 0 0 2px 4px; background: #111; }
.actions { display: flex; gap: 8px; justify-content: flex-end; padding: 8px 8px 10px; }
.actions button { width: 99px; }
.actions .primary { border: 2px solid #0078d7; }
.actions .close { margin-left: 21px; }
.sizer { position: absolute; right: 3px; bottom: 2px; }
.marks { position: absolute; left: -1px; top: -1px; overflow: visible; pointer-events: none; filter: drop-shadow(2px 2px 2px rgb(0 0 0 / .45)); }
.step { position: absolute; width: 24px; height: 24px; border: 2px solid #fff; border-radius: 50%; background: #0000f5; color: #fff; font: 14px/20px "Noto Sans", sans-serif; text-align: center; box-shadow: 1px 2px 4px rgb(0 0 0 / .6); }
.one { left: 50px; top: -21px; }
.two { left: 67px; top: 107px; }
.three { left: 259px; top: 145px; }

.meter { position: absolute; right: 0; bottom: 27px; width: 10px; height: 44px; padding: 7px 2px 0 4px; border-radius: 3px 0 0 0; background: #505563; }
.meter i { display: block; height: 37px; background: repeating-linear-gradient(transparent 0 2px, #505563 2px 3px), linear-gradient(#2b2d35 25%, #f0a040 30%, #e8e05a 55%, #6fe08a); }
.ime { position: absolute; right: 0; bottom: 0; display: flex; align-items: center; gap: 9px; width: 145px; height: 27px; padding-left: 28px; border: 1px solid #a9c6e8; border-radius: 4px 0 0 4px; background: #fff; }
.ime svg { overflow: visible; }
.ime button { color: #0a6fd8; font-size: 14px; font-weight: 700; }
.brand { position: absolute; right: 4px; bottom: 0; display: flex; width: 155px; height: 50px; pointer-events: none; }
.brand div { margin-left: -2px; }
.brand strong { display: block; color: #69a3dc; font-size: 21px; line-height: 22px; font-weight: 700; white-space: nowrap; }
.brand span { display: block; color: #4fbb78cc; font-size: 16px; line-height: 22px; }
```
FILE: grid.js
```javascript
const columns = "ABCDEFGHIJKLM".split("");
const rows = [
  ["部门", "数量"],
  ["财务部", 86],
  ["销售部", 52],
  ["人事部", 85],
  ["行政部", 37],
  ["综合部", 52],
];
const active = { column: "D", row: 8 };
const rowCount = 27;

const corner = '<th class="corner"><svg width="18" height="18" viewBox="0 0 18 18"><path d="M18 0v18H0z" fill="#b9babd"/></svg></th>';
const head = columns.map(c => `<th${c === active.column ? ' class="sel"' : ""}>${c}</th>`).join("");
let body = "";
for (let r = 1; r <= rowCount; r++) {
  const cells = columns.map((c, i) => {
    const here = r === active.row && c === active.column;
    return `<td${here ? ' class="cursor"' : ""}>${(rows[r - 1] || [])[i] ?? ""}</td>`;
  }).join("");
  body += `<tr><th${r === active.row ? ' class="sel"' : ""}>${r}</th>${cells}</tr>`;
}
document.getElementById("grid").innerHTML = `<thead><tr>${corner}${head}</tr></thead><tbody>${body}</tbody>`;
```
